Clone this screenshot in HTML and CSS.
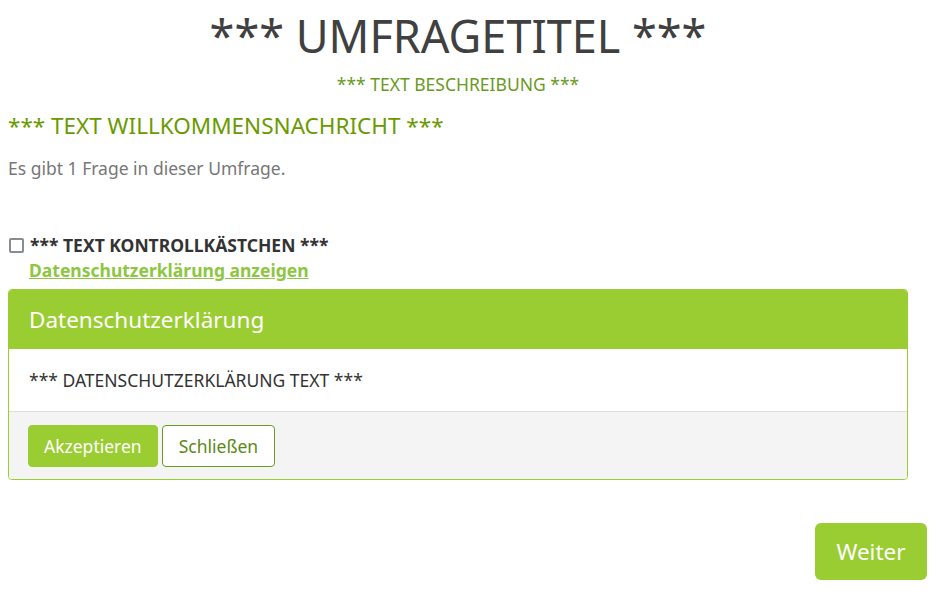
FILE: index.html
```html
<!DOCTYPE html>
<html lang="de">
<head>
<meta charset="utf-8">
<title>Umfrage</title>
<link rel="stylesheet" href="styles.css">
</head>
<body>
<div class="page">
  <div class="main">
    <h1 class="survey-title">*** UMFRAGETITEL ***</h1>
    <p class="survey-desc">*** TEXT BESCHREIBUNG ***</p>
    <h2 class="welcome">*** TEXT WILLKOMMENSNACHRICHT ***</h2>
    <p class="count">Es gibt 1 Frage in dieser Umfrage.</p>

    <div class="consent">
      <label class="consent-label"><span class="box"></span>*** TEXT KONTROLLKÄSTCHEN ***</label>
      <a class="consent-link" href="#">Datenschutzerklärung anzeigen</a>
    </div>

    <div class="panel">
      <div class="panel-head">Datenschutzerklärung</div>
      <div class="panel-body">*** DATENSCHUTZERKLÄRUNG TEXT ***</div>
      <div class="panel-foot">
        <button class="btn btn-primary">Akzeptieren</button>
        <button class="btn btn-outline">Schließen</button>
      </div>
    </div>
  </div>

  <div class="nav">
    <button class="btn-next">Weiter</button>
  </div>
</div>
</body>
</html>
```
FILE: styles.css
```css
* { box-sizing: border-box; }
html, body { margin: 0; padding: 0; background: #fff; }
body {
  font-family: "Noto Sans", "Open Sans", sans-serif;
  color: #444;
}
.page { padding: 0 10px 0 8px; }
.main { width: 900px; }
.survey-title {
  margin: 0;
  padding-top: 10px;
  text-align: center;
  font-weight: 400;
  font-size: 45px;
  line-height: 52px;
  color: #404040;
}
.survey-desc {
  margin: 10px 0 0;
  text-align: center;
  font-size: 17.5px;
  line-height: 24px;
  color: #6a9a1f;
}
.welcome {
  margin: 15px 0 0;
  font-weight: 400;
  font-size: 22.5px;
  line-height: 30px;
  color: #6a9a00;
}
.count {
  margin: 15px 0 0;
  font-size: 17.5px;
  line-height: 24px;
  color: #777;
}
.consent { margin-top: 53px; }
.consent-label {
  display: flex;
  align-items: center;
  font-weight: 700;
  font-size: 17.5px;
  line-height: 24px;
  color: #333;
}
.box {
  width: 15px; height: 15px;
  border: 2px solid #8a8a92;
  border-radius: 2px;
  margin: 0 6px 0 1px;
}
.consent-link {
  display: block;
  margin-left: 21px;
  margin-top: 1px;
  font-weight: 700;
  font-size: 17.5px;
  line-height: 24px;
  color: #8dc63f;
  text-decoration: underline;
}
.panel {
  margin-top: 7px;
  width: 900px;
  border: 1px solid #9acd32;
  border-radius: 4px;
  overflow: hidden;
}
.panel-head {
  background: #9acd32;
  color: #fff;
  font-size: 22.5px;
  height: 59px;
  padding: 0 20px;
  display: flex;
  align-items: center;
}
.panel-body {
  height: 62px;
  padding: 0 20px;
  display: flex;
  align-items: center;
  font-size: 17.5px;
  color: #333;
}
.panel-foot {
  background: #f4f4f4;
  border-top: 1px solid #ddd;
  padding: 13px 19px 12px;
  display: flex;
  gap: 4px;
}
.btn {
  font-family: inherit;
  font-size: 17.5px;
  height: 42px;
  padding: 0 15px;
  border-radius: 4px;
  cursor: pointer;
}
.btn-primary {
  background: #9acd32;
  border: 1px solid #9acd32;
  color: #fff;
}
.btn-outline {
  background: #fff;
  border: 1px solid #6a9a1f;
  color: #5b8a14;
  padding: 0 16px;
}
.nav {
  display: flex;
  justify-content: flex-end;
  margin-top: 43px;
}
.btn-next {
  font-family: inherit;
  font-size: 22.5px;
  height: 57px;
  width: 112px;
  background: #9acd32;
  border: none;
  border-radius: 6px;
  color: #fff;
}
```
